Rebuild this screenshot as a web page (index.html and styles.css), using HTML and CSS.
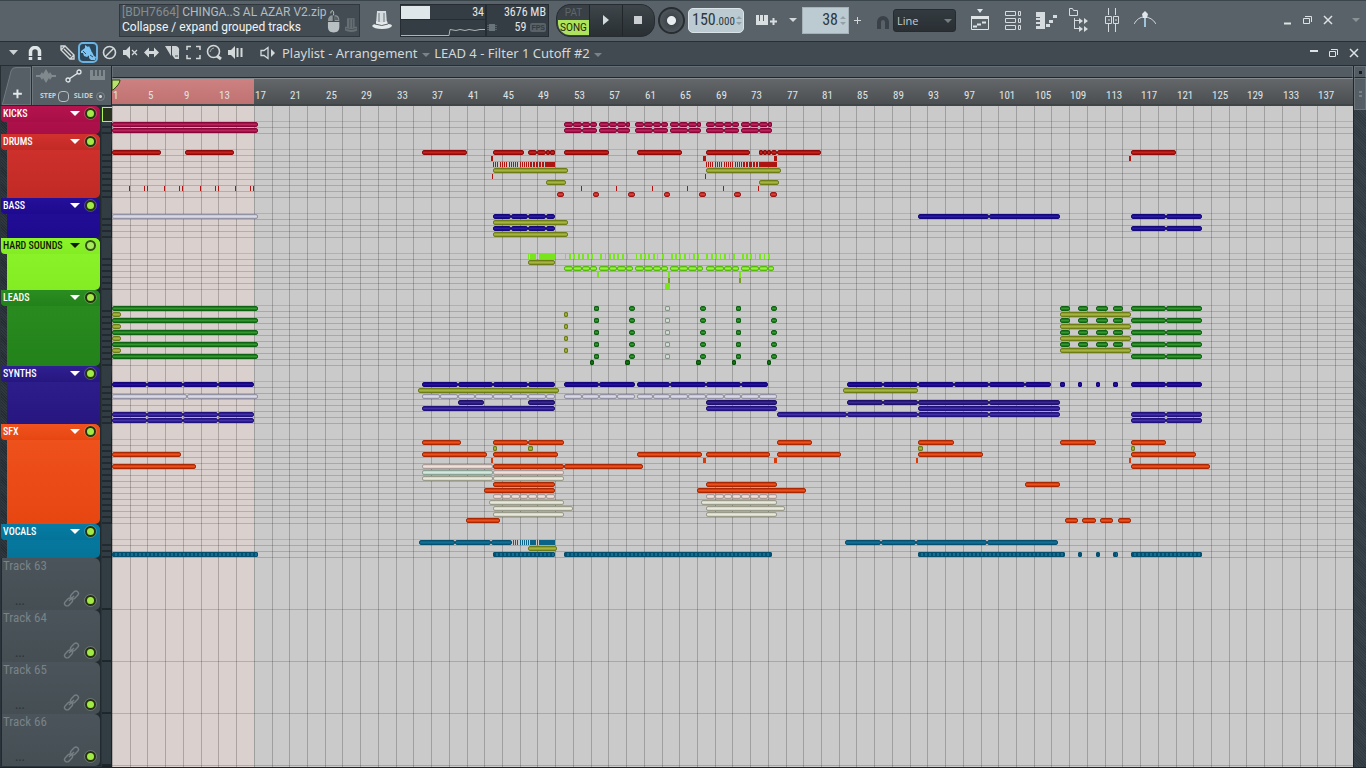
FILE: index.html
```html
<!DOCTYPE html>
<html lang="en">
<head>
<meta charset="utf-8">
<title>Playlist - Arrangement</title>
<link rel="stylesheet" href="styles.css">
</head>
<body>
<header class="topbar">
  <div class="hint">
    <div class="hint-text">
      <p class="hint-title"><span class="dim">[BDH7664]</span> CHINGA..S AL AZAR V2.zip</p>
      <p class="hint-desc">Collapse / expand grouped tracks</p>
    </div>
    <svg class="hint-icons" width="32" height="26" viewBox="0 0 32 26">
      <path d="M4 4c0-4 3-4 3 0v2" fill="none" stroke="#c3cace" stroke-width="1"/>
      <path d="M1 12c0-4 2-6 5-6v6zM8 6c4 0 5 2 5 6H8z" fill="#8f979b"/><path d="M8 7c3 0 4 2 4 4H8z" fill="#5a6368"/>
      <path d="M1 13h12v5c0 4-2 6-6 6s-6-2-6-6z" fill="#b9c0c3"/>
      <path d="M21 9h8v9h3v4q-7 3-13 0v-4h2z" fill="#666f74"/><path d="M24 10v9M27 10v9M20 20q5 2 11 0" stroke="#4a5359" fill="none"/>
    </svg>
  </div>
  <button class="plain hat" aria-label="Hint level"><svg width="20" height="20" viewBox="0 0 20 20"><path d="M5 1h9l1 13H4z" fill="#d5dcdf"/><path d="M7 3v9M12 3v9" stroke="#6b7276"/><path d="M4 11q6 3 11 0l1 3q4 0 4 2-2 3-10 3T0 16q1-2 4-2z" fill="#e4eaec"/><path d="M3 14q7 3 13 0" stroke="#596166" fill="none"/></svg></button>
  <div class="meters">
    <div class="cpu"><div class="cpu-row"><span class="cpu-bar"></span><b>34</b></div>
      <svg class="cpu-graph" width="84" height="16" viewBox="0 0 84 16"><path d="M0 15.500h48l1-6 6 1 4-1 5 1 4-1 6 1 5-1h5" fill="none" stroke="#aeb5b8"/></svg></div>
    <div class="mem"><b>3676 MB</b>
      <div class="fps-row"><svg width="10" height="8" viewBox="0 0 10 8"><path d="M0 1.500h10M0 3.500h10M0 5.500h10" stroke="#566067"/><path d="M2 0h6v7H2z" fill="#68737a"/></svg><b>59</b><i>FPS</i></div></div>
  </div>
  <div class="transport">
    <div class="mode"><button class="pat">PAT</button><button class="song">SONG</button></div>
    <button class="key" aria-label="Play"><svg width="8" height="12" viewBox="0 0 8 12"><path d="M1 1l6 5-6 5z" fill="#d5dadc"/></svg></button>
    <button class="key stop" aria-label="Stop"><svg width="8" height="8"><path d="M0 0h8v8H0z" fill="#c9ced0"/></svg></button>
  </div>
  <button class="record" aria-label="Record"></button>
  <div class="lcd tempo"><span class="big">150</span><span class="small">.000</span><svg width="7" height="11" viewBox="0 0 7 11"><path d="M0 4l3-3 3 3zM0 7l3 3 3-3z" fill="#93a0a6"/></svg></div>
  <button class="plain piano" aria-label="Typing keyboard"><svg width="21" height="12" viewBox="0 0 21 12"><path d="M0 1h3v6h1V1h3v6h1V1h4v10H0z" fill="#d9dee0"/><path d="M17.500 4v7M14 7.500h7" stroke="#d9dee0" stroke-width="2"/></svg></button>
  <button class="plain drop" aria-label="More"><svg width="8" height="4"><path d="M0 0h8L4 4z" fill="#d3d8da"/></svg></button>
  <div class="lcd pattern"><span class="big">38</span><svg width="7" height="11" viewBox="0 0 7 11"><path d="M0 4l3-3 3 3zM0 7l3 3 3-3z" fill="#93a0a6"/></svg></div>
  <button class="plain add" aria-label="Add pattern"><svg width="7" height="7"><path d="M3.500 0v7M0 3.500h7" stroke="#d3d8da"/></svg></button>
  <svg class="snap-icon" width="12" height="13" viewBox="0 0 12 13"><path d="M2 13V6a4 4 0 0 1 8 0v7" fill="none" stroke="#3b4247" stroke-width="4"/></svg>
  <div class="snap-box"><select class="snap" aria-label="Snap"><option>Line</option></select></div>
  <nav class="views">
    <button class="plain" aria-label="Playlist"><svg width="20" height="22" viewBox="0 0 20 22"><path d="M7 0h6l-3 4z" fill="#dfe5e7"/><path d="M1.500 7.500h17v13h-17z" fill="none" stroke="#dfe5e7"/><path d="M1 7h18v3H1z" fill="#dfe5e7"/><path d="M3 17.500h4M7 15.500h4M12 13.500h4" stroke="#dfe5e7" stroke-width="2"/></svg></button>
    <button class="plain" aria-label="Channel rack"><svg width="20" height="22" viewBox="0 0 20 22"><path d="M2.500 2.500h10v4h-10zM2.500 9.500h10v4h-10zM2.500 16.500h10v4h-10zM15.500 2.500h2v4h-2zM15.500 9.500h2v4h-2zM15.500 16.500h2v4h-2z" fill="none" stroke="#d5dbde"/></svg></button>
    <button class="plain" aria-label="Piano roll"><svg width="22" height="22" viewBox="0 0 22 22"><path d="M1 3h9v17H1v-3h4v-2H1v-2h4v-2H1v-2h4V8H1z" fill="#d5dbde"/><path d="M11 16.500h4M14 12.500h4M18 7.500h4" stroke="#d5dbde" stroke-width="3"/></svg></button>
    <button class="plain" aria-label="Browser"><svg width="20" height="26" viewBox="0 0 20 26"><path d="M.5 1.500h3l1 2h4v5h-8z" fill="none" stroke="#d5dbde"/><path d="M5.500 11v11M5 13.500h6M5 21.500h6" fill="none" stroke="#d5dbde"/><path d="M10 11l4 3-4 3zM15 11l4 3-4 3zM10 19l4 3-4 3zM15 19l4 3-4 3z" fill="#d5dbde"/></svg></button>
    <button class="plain" aria-label="Mixer"><svg width="20" height="24" viewBox="0 0 20 24"><path d="M6.500 0v7M6.500 16v8M13.500 0v7M13.500 16v8M3.500 8.500h6v7h-6zM11.500 8.500h5v7h-5zM6 12h2M13 12h2" fill="none" stroke="#d5dbde"/></svg></button>
    <button class="plain" aria-label="Plugin picker"><svg width="22" height="20" viewBox="0 0 22 20"><path d="M0 14q4-7 10-7 8 0 12 7" fill="none" stroke="#cfd6d9"/><path d="M8 4l3-3 3 3-1 4H9z" fill="#e2e7e9"/><path d="M11 8v9" stroke="#9fc3d8" stroke-width="2"/></svg></button>
  </nav>
  <div class="win">
    <button class="plain" aria-label="Minimize"><svg width="12" height="12"><path d="M2 9.500h7" stroke="#dde2e4" stroke-width="2"/></svg></button>
    <button class="plain" aria-label="Restore"><svg width="12" height="12" viewBox="0 0 12 12"><path d="M1.500 4.500h6v5h-6zM3 2.500h6.500V8" fill="none" stroke="#dde2e4"/></svg></button>
    <button class="plain" aria-label="Close"><svg width="12" height="12"><path d="M2 2l8 8M10 2l-8 8" stroke="#dde2e4" stroke-width="1.500"/></svg></button>
    <button class="plain last" aria-label="Toolbar menu"><svg width="8" height="4"><path d="M0 0h8L4 4z" fill="#8b9295"/></svg></button>
  </div>
</header>

<main class="playlist">
  <div class="titlebar">
    <div class="tools">
      <button class="plain menu" aria-label="Playlist menu"><svg width="9" height="5"><path d="M0 0h9L4.500 5z" fill="#cdd2d4"/></svg></button>
      <button class="plain magnet" aria-label="Snap"><svg width="14" height="14" viewBox="0 0 14 14"><path d="M2.500 14V6a4 4 0 0 1 9 0v8" fill="none" stroke="#dfe5e7" stroke-width="3.500"/><path d="M0 10.500h5M9 10.500h5" stroke="#414a50"/></svg></button>
      <button class="plain" aria-label="Draw"><svg width="17" height="17" viewBox="0 0 17 17"><path d="M2 2h4l9 9v4h-4L2 6zM2 6l4-4M11 15l4-4M5 5l7 7" fill="none" stroke="#d3d9db" stroke-width="1.400"/></svg></button>
      <button class="plain active" aria-label="Paint"><svg width="17" height="17" viewBox="0 0 17 17"><path d="M1 7l4-3V1l3 2 1-1 2 4 1 3-5 4-3-1-1-3H1zM9 10l3-2 2 4 2 1-1 3h-4l-2-2z" fill="#7cc4f2"/><path d="M3 7l3 3M10 11l3 2" stroke="#314d60"/></svg></button>
      <button class="plain" aria-label="Delete"><svg width="17" height="17" viewBox="0 0 17 17"><circle cx="8.500" cy="8.500" r="6" fill="none" stroke="#d3d9db" stroke-width="1.600"/><path d="M4 13l9-9" stroke="#d3d9db" stroke-width="1.500"/></svg></button>
      <button class="plain" aria-label="Mute"><svg width="17" height="17" viewBox="0 0 17 17"><path d="M1 6h3l4-4v13l-4-4H1z" fill="#d3d9db"/><path d="M10 6l5 5M15 6l-5 5" stroke="#d3d9db" stroke-width="1.300"/></svg></button>
      <button class="plain" aria-label="Slip"><svg width="17" height="17" viewBox="0 0 17 17"><path d="M1 8.500l5-5v3.500h5V3.500l5 5-5 5V10H6v3.500z" fill="#d3d9db"/></svg></button>
      <button class="plain" aria-label="Slice"><svg width="17" height="17" viewBox="0 0 17 17"><path d="M1 2h6v10zM8 2h4q4 1 3 6v7h-4L8 11z" fill="#cdd3d5"/><path d="M11 12h3" stroke="#414a50"/></svg></button>
      <button class="plain" aria-label="Select"><svg width="17" height="17" viewBox="0 0 17 17"><path d="M2 6V2.500h4M11 2.500h4V6M15 11v3.500h-4M6 14.500H2V11" fill="none" stroke="#d3d9db" stroke-width="1.500"/></svg></button>
      <button class="plain" aria-label="Zoom"><svg width="17" height="17" viewBox="0 0 17 17"><circle cx="7.500" cy="7.500" r="6" fill="none" stroke="#d3d9db" stroke-width="1.600"/><path d="M4 8q1-4 4-4" fill="none" stroke="#a7aeb1"/><path d="M11 12l4 3" stroke="#d3d9db" stroke-width="3"/></svg></button>
      <button class="plain" aria-label="Playback"><svg width="17" height="17" viewBox="0 0 17 17"><path d="M1 6h3l4-4v13l-4-4H1z" fill="#d3d9db"/><path d="M10.500 4v9M14.500 4v9" stroke="#d3d9db" stroke-width="2"/></svg></button>
    </div>
    <button class="plain speaker" aria-label="Preview"><svg width="16" height="14" viewBox="0 0 16 14"><path d="M1 4.500h3l4-3v11l-4-3H1z" fill="none" stroke="#d3d9db" stroke-width="1.300"/><path d="M11 3l4 4-4 4z" fill="#d3d9db"/></svg></button>
    <h1>Playlist - Arrangement <i class="caret"></i> LEAD 4 - Filter 1 Cutoff #2 <i class="caret"></i></h1>
    <div class="win">
      <button class="plain" aria-label="Minimize playlist"><svg width="12" height="12"><path d="M2 4h8" stroke="#dde2e4" stroke-width="2"/></svg></button>
      <button class="plain" aria-label="Restore playlist"><svg width="12" height="12" viewBox="0 0 12 12"><path d="M1.500 4.500h6v5h-6zM3 2.500h6.500V8" fill="none" stroke="#dde2e4"/></svg></button>
      <button class="plain" aria-label="Close playlist"><svg width="12" height="12"><path d="M2 2l8 8M10 2l-8 8" stroke="#dde2e4" stroke-width="1.500"/></svg></button>
    </div>
  </div>

  <div class="workspace">
    <div class="corner">
      <button class="tab-add" aria-label="Add track">
        <svg width="30" height="40" viewBox="0 0 30 40"><path d="M1 39.500L10 5q1-3.500 5-3.500h15V40z" fill="#555f65" stroke="#727c82"/><path d="M16.500 24v9M12 28.500h9" stroke="#e3e8ea" stroke-width="2"/></svg></button>
      <div class="corner-main">
        <div class="corner-icons">
          <svg width="20" height="14" viewBox="0 0 20 14"><path d="M0 6h4l2-3 1 2 3-5 3 5 1-2 2 3h4v2h-4l-2 3-1-2-3 5-3-5-1 2-2-3H0z" fill="#7f898e"/></svg>
          <svg width="17" height="14" viewBox="0 0 17 14"><path d="M4 10l9-6" stroke="#dfe5e7" stroke-width="1.500"/><circle cx="3" cy="11" r="2" fill="none" stroke="#dfe5e7" stroke-width="1.300"/><circle cx="14" cy="3" r="2" fill="none" stroke="#dfe5e7" stroke-width="1.300"/></svg>
          <svg width="15" height="12" viewBox="0 0 15 12"><path d="M0 1h3v6h2V1h2v6h2V1h2v6h2V1h2v10H0z" fill="#7f898e"/></svg>
        </div>
        <div class="corner-opts"><label>STEP<input type="checkbox"></label><label>SLIDE<input type="radio" checked></label></div>
      </div>
    </div>
    <div class="hscroll"></div>
    <div class="scroll-cap"></div>
    <div class="ruler" id="ruler"><div class="ruler-sel"></div><svg class="playhead" width="9" height="12"><path d="M0 1h8q0 4-7 10H0z" fill="#b7e36c" stroke="#2f3d17"/></svg></div>
    <div class="vthumb"></div>
    <div class="headers" id="headers"></div>
    <div class="canvas" id="canvas"><div class="selection"></div></div>
    <div class="vtrack"></div>
  </div>
</main>
<script src="playlist.js"></script>
</body>
</html>
```
FILE: styles.css
```css
* { box-sizing: border-box; }
body {
  --narrow: "Roboto Condensed", Roboto, sans-serif;
  margin: 0;
  height: 100vh;
  display: flex;
  flex-direction: column;
  overflow: hidden;
  background: #1f272c;
  font-family: "Noto Sans", "Open Sans", sans-serif;
  color: #e3e7e9;
}
p, h1 { margin: 0; font-weight: 400; }
b, i { font-weight: 400; font-style: normal; }
svg { display: block; }
.plain { background: none; border: 0; padding: 0; display: grid; place-items: center; flex: none; }

/* main toolbar */
.topbar {
  flex: none;
  height: 42px;
  display: flex;
  align-items: center;
  padding-left: 119px;
  padding-bottom: 2px;
  background: #596269;
  border-top: 1px solid #3a444b;
  border-bottom: 1px solid #262f34;
}
.hint {
  width: 241px;
  height: 33px;
  display: flex;
  justify-content: space-between;
  padding: 0 2px;
  background: #434c53;
  border: 1px solid #30383e;
  font: 12px/15px Roboto, "Open Sans", sans-serif;
  white-space: nowrap;
}
.hint-title { color: #b5bcc0; }
.hint-desc { color: #f0f3f4; }
.dim { color: #858d91; }
.hint-icons { margin-top: 4px; }
.hat { margin: 0 8px 0 12px; }
.meters {
  width: 149px;
  height: 33px;
  display: grid;
  grid-template-columns: 84px 1fr;
  gap: 2px;
  padding: 1px;
  background: #252d33;
  font-family: var(--narrow);
  font-size: 12px;
  line-height: 15px;
}
.cpu, .mem { background: #343d43; }
.cpu-row { display: flex; justify-content: space-between; height: 15px; border-bottom: 1px solid #252d33; padding-right: 1px; }
.cpu-bar { width: 29px; height: 13px; margin-top: 1px; background: #dfe7ea; }
.mem { text-align: right; padding-right: 2px; }
.fps-row { display: flex; align-items: center; height: 16px; }
.fps-row b { margin-left: auto; margin-right: 4px; }
.fps-row i { background: #596268; color: #343d43; font: bold 7px/9px "Liberation Sans", sans-serif; padding: 0 1px; border-radius: 2px; }
.transport {
  width: 99px;
  height: 33px;
  margin-left: 7px;
  display: flex;
  gap: 1px;
  background: #20262a;
  border: 1px solid #272e33;
  border-radius: 14px;
  overflow: hidden;
}
.mode { flex: 0 0 32px; display: flex; flex-direction: column; padding-left: 1px; padding-bottom: 1px; background: #394046; }
.mode button { flex: 1; border: 0; padding: 0; background: none; font: 10px/15px Roboto, sans-serif; }
.mode .pat { color: #5d666b; }
.mode .song { background: #ade35d; color: #1c260e; border-radius: 0 0 0 12px; }
.key { flex: 1; border: 0; padding: 0; display: grid; place-items: center; background: linear-gradient(#3e464b, #292f33); }
.record { flex: none; width: 27px; height: 27px; margin-left: 3px; padding: 0; border: 2px solid #272d31; border-radius: 50%; background: radial-gradient(circle, #e8eef0 4px, #40484d 5px, #596166); }
.lcd { flex: none; display: flex; align-items: center; background: #bccbd2; color: #2f383d; font-family: var(--narrow); }
.lcd .big { font-size: 16px; line-height: 22px; }
.lcd .small { font-size: 11px; padding-top: 3px; }
.tempo { width: 56px; height: 25px; margin-left: 3px; padding-left: 3px; border: 1px solid #dbe5e9; border-radius: 5px; }
.tempo svg { flex: none; margin-left: auto; }
.piano { margin-left: 12px; }
.drop { margin: 0 5px 0 12px; }
.pattern { width: 47px; height: 27px; justify-content: flex-end; padding-right: 1px; border: 1px solid #a4b1b7; }
.pattern svg { margin-left: 2px; }
.add { margin: 0 16px 0 5px; }
.snap-icon { margin-top: 4px; }
.snap-box { position: relative; margin-left: 4px; }
.snap-box::after { content: ""; position: absolute; right: 4px; top: 10px; border: 4px solid transparent; border-top-color: #767e82; border-bottom: 0; pointer-events: none; }
.snap {
  display: block;
  width: 63px;
  height: 23px;
  padding: 0 3px;
  appearance: none;
  color: #c6cccf;
  background: linear-gradient(#343b40, #292f33);
  border: 1px solid #252b2f;
  border-radius: 3px;
  font: 11px "Open Sans", sans-serif;
}
.views { display: flex; gap: 11px; margin-left: 13px; align-items: center; }
.views .plain { width: 22px; height: 28px; }
.win { margin-left: auto; display: flex; align-items: center; gap: 8px; padding-right: 6px; }
.win .last { margin: 0 0 0 10px; }

/* playlist window */
.playlist { flex: 1; min-height: 0; display: flex; flex-direction: column; }
.titlebar { flex: none; height: 24px; display: flex; align-items: center; padding: 0 0 2px 9px; background: #414a50; border-bottom: 1px solid #262e33; }
.tools { display: flex; align-items: center; gap: 1px; }
.tools .plain { width: 20px; height: 21px; }
.tools .menu { width: 9px; margin-right: 8px; }
.tools .magnet { width: 16px; margin-right: 13px; }
.tools .active { border: 2px solid #6ab3e2; border-radius: 5px; background: #2b4658; }
.speaker { margin: 0 6px 0 15px; }
.titlebar h1 { font-size: 13px; line-height: 20px; color: #d3d8da; white-space: nowrap; }
.caret { display: inline-block; margin: 0 1px; border: 4px solid transparent; border-top-color: #7b8387; border-bottom: 0; vertical-align: 1px; }
.workspace {
  flex: 1;
  min-height: 0;
  display: grid;
  grid-template-columns: 112px 1fr 12px;
  grid-template-rows: 12px 28px 1fr;
  border-bottom: 1px solid #1c2429;
}
.corner { grid-row: 1 / 3; display: flex; background: #262f34; border-right: 1px solid #20282d; border-bottom: 1px solid #222a2f; gap: 1px; padding-left: 1px; }
.tab-add { border: 0; padding: 0; background: #414a50; }
.tab-add svg { height: 39px; }
.corner-main { flex: 1; display: flex; flex-direction: column; justify-content: space-between; background: #555f65; border: 1px solid #6c767b; border-width: 1px 0 0 1px; padding: 2px 6px 3px 3px; }
.corner-icons { display: flex; justify-content: space-between; }
.corner-opts { display: flex; justify-content: space-between; font: bold 7px/12px "Open Sans", sans-serif; color: #c8cdd0; padding-left: 4px; }
.corner-opts label { display: flex; align-items: center; gap: 2px; }
.corner-opts input { appearance: none; margin: 0; width: 11px; height: 11px; border: 1px solid #b9c0c3; border-radius: 4px; }
.corner-opts input[type=radio] { width: 9px; height: 9px; border-color: #7b8589; border-radius: 50%; background: radial-gradient(circle, #cfd5d8 1px, transparent 2px); margin-left: 1px; }
.hscroll { background: #535c62; border: 1px solid #666f75; border-bottom: 1px solid #20282c; margin-right: 1px; }
.scroll-cap { background: linear-gradient(#161c20, #161c20) 50% 50% / 3px 3px no-repeat #535c62; border: 1px solid #687177; border-bottom-color: #20282c; }
.ruler { position: relative; overflow: hidden; background: linear-gradient(#63676a, #4c4f52); border-top: 1px solid #858b8e; border-bottom: 2px solid #404548; margin-right: 1px; }
.ruler span { position: absolute; top: 10px; font: 11px/14px var(--narrow); color: #dfe3e5; }
.ruler-sel { position: absolute; left: 0; top: 0; bottom: 0; width: 142px; background: linear-gradient(#cd8181, #c07272); }
.playhead { position: absolute; left: 0; top: 0; }
.vthumb { height: 32px; background: linear-gradient(#767f84 0 2px, transparent 2px 4px, #767f84 4px) 50% 50% / 3px 6px no-repeat #555e64; border: 1px solid #6c757a; z-index: 1; }
.vtrack { background: repeating-linear-gradient(45deg, #39434a 0 1px, #313a40 1px 2px); }

/* track headers */
.headers { overflow: hidden; display: flex; flex-direction: column; background: linear-gradient(90deg, #2b343a 102px, #1a2227 102px); }
.track { flex: none; display: grid; grid-template-columns: 100px 10px; column-gap: 1px; padding-left: 1px; }
.cells { background: repeating-linear-gradient(#313c43 0 4px, #202a30 4px 6px); border-top: 16px solid #313c43; border-right: 1px solid #1a2227; }
.cells.first { position: relative; }
.cells.first::before { content: ""; position: absolute; top: -15px; left: 0; width: 9px; height: 13px; border: 1px solid #b4f25a; background: #27321f; }
.empty .cells { border-top: 0; background: #313c43; border-bottom: 2px solid #1d262b; }
.name { position: relative; background: #202a2f; }
.tint { position: absolute; left: 6px; right: 1px; top: 0; bottom: 0; background: var(--c); border-radius: 0 6px 5px 0; }
.label { position: relative; display: flex; height: 16px; margin-right: 1px; padding-left: 2px; background: var(--c); border-radius: 0 6px 0 4px; font: 500 10px/15px var(--narrow); color: #fff; white-space: nowrap; }
.hatch { position: absolute; left: 0; top: 0; bottom: 0; width: 6px; background: repeating-linear-gradient(45deg, #2f393f 0 1px, #252d32 1px 2px); }
.fold { position: absolute; left: 69px; top: 5px; padding: 0; border: 5px solid transparent; border-top-color: currentColor; border-bottom: 0; background: none; color: #fff; }
.led { position: absolute; left: 84px; top: 2px; width: 11px; height: 11px; padding: 0; border: 2px solid #26330f; border-radius: 50%; background: #a2ea45; outline: 1px solid rgba(190, 200, 190, .3); }
.dark .led { border-color: #33530c; background: #a5e95c; }
.dark .label, .dark .fold { color: #101a05; }
.empty { --c: linear-gradient(#4a545a, #454e53); }
.empty .tint { left: 1px; }
.empty .label { background: none; color: #798287; font: 13px/16px var(--narrow); }
.empty .led { top: 37px; }
.empty .dots { position: absolute; left: 14px; top: 37px; font-size: 12px; line-height: 12px; color: #2d353a; }
.link { position: absolute; left: 62px; top: 32px; }

/* clip area */
.canvas { position: relative; overflow: hidden; background: #cacaca; margin-right: 1px; }
.selection { position: absolute; left: 0; top: 0; bottom: 0; width: 142px; background: #dad0ce; }
.bars { position: absolute; left: 0; top: 0; }
.group { position: relative; padding-top: 16px; background: linear-gradient(rgba(0, 0, 0, .13), rgba(0, 0, 0, .13)) 0 15px / 100% 1px no-repeat; }
.lane { position: relative; height: 6px; border-bottom: 1px solid rgba(0, 0, 0, .17); }
.lane.tall { height: 52px; }
.clip {
  position: absolute;
  top: 0;
  height: 5px;
  border: 1px solid var(--d);
  border-radius: 2px;
  background: linear-gradient(var(--m) 1px, var(--l) 1px 2px, var(--m) 2px);
}
.clip.small { border-radius: 1px; }
.clip.tick { border-radius: 0; border-width: 0; background: var(--m); }
.clip.bead { border-radius: 1px; background: repeating-linear-gradient(90deg, var(--d) 0 2px, var(--l) 2px 4px); }
.kick { --d: #87073a; --m: #a3134a; --l: #bb2559; }
.drum { --d: #8e0a0a; --m: #ad1512; --l: #c22520; }
.hit { --d: #9b1715; --m: #c42c28; --l: #da413b; }
.auto { --d: #6e7c18; --m: #92a02e; --l: #a6b441; }
.bass { --d: #150878; --m: #1c0e8c; --l: #2a1c9e; }
.pale { --d: #9292a4; --m: #c9c9d8; --l: #d9d9e6; }
.lime { --d: #57b80f; --m: #79e51d; --l: #96f442; }
.moss { --d: #6b8d1a; --m: #799c25; --l: #8cae38; }
.lead { --d: #0f6213; --m: #1d7e1c; --l: #36962f; }
.deep { --d: #075108; --m: #0c640e; --l: #147617; }
.ghost { --d: #87958a; --m: #c6d2c6; --l: #d8e2d8; }
.navy { --d: #14057a; --m: #1c068a; --l: #26129b; }
.plum { --d: #1e0f68; --m: #2b1880; --l: #3a278f; }
.synth { --d: #21127b; --m: #2f1b96; --l: #4331a9; }
.sfx { --d: #a62805; --m: #d63c0c; --l: #ed501c; }
.pink { --d: #a99b98; --m: #e4cfca; --l: #f1dfda; }
.mint { --d: #8aa196; --m: #c2d9cd; --l: #d3e7dc; }
.cream { --d: #9b9b8b; --m: #d7d8c8; --l: #e7e8da; }
.vocal { --d: #06506f; --m: #0c6388; --l: #136f96; }
```
FILE: playlist.js
```js
const ORIGIN = 112;
const BAR = 8.863;

// Each lane lists "kind: edges"; edges joined by commas are back-to-back clips,
// a slash starts a new run, and @ entries are single ticks (start or start+width).
const leadRow = 'lead:112,258/594,599/629,635/700,706/736,741/771,777/1060,1070/1078,1088/1096,1108/1113,1123/1131,1166,1202;ghost:665,670';
const leadAuto = 'auto:112,121/564,568/1060,1131';
const groups = [
  { name: 'KICKS', color: 'linear-gradient(#b5134e, #a80f47)', lanes: [
    'kick:112,258/564,573,582,590,597/599,609,617,626,630/635,644,653,661,668/670,679,688,697,701/706,715,724,732,739/741,750,759,768,772',
    'kick:112,258/564,582,597/599,617,630/635,653,668/670,688,701/706,724,739/741,759,772'] },
  { name: 'DRUMS', color: 'linear-gradient(#d2322e, #c12a25)', lanes: [
    'drum:112,161/185,234/422,467/493,524/528,537,546,550,555/564,609/637,682/706,750/759,763,767,771,777,821/1131,1176',
    'drum:@491+2,703+3,774+3,1129+2',
    'drum:@493,495,497,500,502,504,506,509,511,513,515,517,520,522,524,526,528,530+2,533+2,536+2,539+2,542+2,545+10,706,708,710,712,715,717,719,721,724,726,728,730,732,735,737,739,741,743+2,746+2,749+3,753+2,756+2,759+18',
    'auto:493,568/706,781',
    'drum:@492,705',
    'auto:546,566/759,779',
    'drum:@129,144,147,164,179,182,200,215,218,235,250,253,581,616,652,687,723,758',
    'hit:557,564/593,599/628,635/664,670/699,706/734,741/770,777'] },
  { name: 'BASS', color: 'linear-gradient(#24109a, #1d0a8e)', lanes: [
    'pale:112,258;bass:493,511,528,546,555/918,989,1060/1131,1166,1202',
    'auto:493,568',
    'bass:493,511,528,546,555/1131,1166,1202',
    'auto:493,568'] },
  { name: 'HARD SOUNDS', dark: true, color: 'linear-gradient(#8cf42a, #83ec23)', lanes: [
    'lime:@528,530+6,537,539+16,565,569+2,573+2,578+2,582+2,587+2,591+2,600+2,605,609+2,613+2,617+2,622+2,627,636,640+2,644+2,648+2,653+2,657,662+2,671+2,675+2,679+2,684+2,689,693+2,698,706+2,711+2,715+2,720,724+2,729,733+2,742+2,746+2,750+2,755,759+2,764,768+2',
    'auto:528,555',
    'lime:564,573,582,590,597/599,609,617,626,633/635,644,653,661,668/670,679,688,697,703/706,715,724,732,739/741,750,759,768,774',
    'lime:@597+2,668+2,739+2',
    'moss:@668+2,739+2',
    'lime:@665+5'] },
  { name: 'LEADS', color: 'linear-gradient(#2a8d20, #23821b)', lanes: [
    leadRow, leadAuto, leadRow, leadAuto, leadRow, leadAuto, leadRow, leadAuto,
    'lead:112,258/594,599/629,635/700,706/736,741/771,777/1131,1166,1202;ghost:665,670',
    'deep:590,594/625,630/696,701/732,736/767,771'] },
  { name: 'SYNTHS', color: 'linear-gradient(#2f2091, #27167f)', lanes: [
    'navy:112,147,183,218,254/422,458,493,528,555/564,599,635/637,670,706,741,768/847,883,918,954,989,1025,1051/1060,1065/1078,1082/1096,1100/1113,1118/1131,1166,1202',
    'auto:418,559/843,918',
    'pale:112,187,258/422,440,458,475,493,511,528,546,555/564,582,599,617,635/637,653,670,688,706,724,741,759,777',
    'plum:458,484/528,555/706,777/847,883,918,989,1060',
    'synth:422,555/706,777/918,1060',
    'synth:112,147,183,218,254/777,847,918,989,1060/1131,1166,1202',
    'synth:112,147,183,218,254/1131,1166,1202'] },
  { name: 'SFX', color: 'linear-gradient(#f0531e, #e74611)', lanes: [
    'sfx:422,461/493,528,564/777,812/918,954/1060,1096/1131,1166',
    'auto:493,497/528,533/918,923/1131,1135',
    'sfx:112,181/422,487/493,558/637,702/706,770/777,841/918,983/1131,1196',
    'sfx:@491+2,703+3,774+3,916+2,1129+2',
    'sfx:112,196/493,564,643/1131,1210;pink:422,493',
    'mint:422,493;pink:493,564',
    'cream:422,493,564',
    'sfx:493,555/706,777/1025,1060',
    'sfx:484,555/697,806',
    'pink:493,502,511,520,528,537,546,555/706,715,724,732,741,750,759,768,777',
    'cream:489,564/701,777',
    'cream:493,573/706,785',
    'cream:493,564/706,777',
    'sfx:466,500/1065,1078/1082,1096/1100,1113/1118,1131'] },
  { name: 'VOCALS', color: 'linear-gradient(#067ca4, #057398)', lanes: [
    'vocal:419,455,491,512/845,881,916,987,1058;vocal:@513,515,517,520,522,524,526,528,530+6,537,539+16',
    'auto:528,557',
    'vocal bead:112,258/493,555/564,772/918,1065/1078,1082/1096,1100/1113,1118/1131,1202'] },
  { name: 'Track 63' }, { name: 'Track 64' }, { name: 'Track 65' }, { name: 'Track 66' }
];

const make = (tag, cls, parent, text) => {
  const el = document.createElement(tag);
  el.className = cls;
  if (text) el.textContent = text;
  parent.append(el);
  return el;
};
const place = (lane, cls, start, width) => {
  const clip = make('div', 'clip ' + cls + (width < 6 ? ' small' : ''), lane);
  clip.style.left = start - ORIGIN + 'px';
  clip.style.width = width + 'px';
};
const fill = (lane, spec) => spec.split(';').forEach(part => {
  const [kind, list] = part.split(':');
  if (list[0] === '@') {
    list.slice(1).split(',').forEach(t => {
      const [x, w = 1] = t.split('+').map(Number);
      place(lane, kind + ' tick', x, w);
    });
    return;
  }
  list.split('/').forEach(run => {
    const e = run.split(',').map(Number);
    for (let i = 1; i < e.length; i++) place(lane, kind, e[i - 1], e[i] - e[i - 1]);
  });
});

const ruler = document.getElementById('ruler');
const canvas = document.getElementById('canvas');
const headers = document.getElementById('headers');
const visible = Math.floor(canvas.clientWidth / BAR);

for (let bar = 1; bar <= visible; bar += 4) {
  make('span', '', ruler, String(bar)).style.left = Math.round((bar - 1) * BAR) + 1 + 'px';
}
let path = '';
for (let bar = 0; bar <= visible; bar += 2) path += `M${Math.round(bar * BAR)} 0h1v3000h-1z`;
canvas.insertAdjacentHTML('beforeend', `<svg class="bars" width="100%" height="100%"><path d="${path}" fill="#000" fill-opacity=".21"/></svg>`);

groups.forEach((g, i) => {
  const track = make('div', 'track' + (g.lanes ? '' : ' empty') + (g.dark ? ' dark' : ''), headers);
  track.style.height = (g.lanes ? 16 + 6 * g.lanes.length : 52) + 'px';
  if (g.color) track.style.setProperty('--c', g.color);
  const name = make('div', 'name', track);
  if (g.lanes) make('div', 'hatch', name);
  make('div', 'tint', name);
  make('div', 'label', name, g.name);
  if (g.lanes) make('button', 'fold', name).setAttribute('aria-label', 'Collapse ' + g.name);
  else {
    make('span', 'dots', name, '...');
    name.insertAdjacentHTML('beforeend', '<svg class="link" width="17" height="17" viewBox="0 0 17 17"><g fill="none" stroke="#747e83" stroke-width="1.4"><rect x="7" y="2.500" width="9" height="5" rx="2.500" transform="rotate(-45 11.500 5)"/><rect x="1" y="9.500" width="9" height="5" rx="2.500" transform="rotate(-45 5.500 12)"/><path d="M6 11l5-5"/></g></svg>');
  }
  make('button', 'led', name).setAttribute('aria-label', 'Mute ' + g.name);
  make('div', 'cells' + (i ? '' : ' first'), track);

  if (!g.lanes) { make('div', 'lane tall', canvas); return; }
  const group = make('div', 'group', canvas);
  g.lanes.forEach(spec => fill(make('div', 'lane', group), spec));
});
```
